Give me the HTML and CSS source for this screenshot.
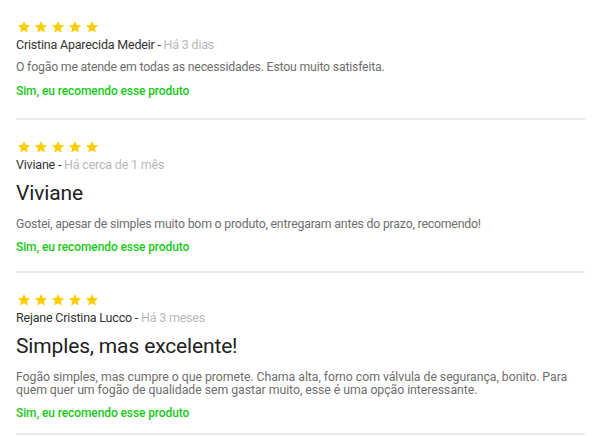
FILE: index.html
```html
<!DOCTYPE html>
<html lang="pt-BR">
<head>
<meta charset="utf-8">
<title>Avaliações</title>
<link rel="stylesheet" href="styles.css">
</head>
<body>
<svg width="0" height="0" class="defs" aria-hidden="true">
  <defs>
    <symbol id="star" viewBox="0 0 24 24">
      <path d="M12 1.5l3.1 6.9 7.4.7-5.6 5 1.7 7.4L12 17.6l-6.6 3.9 1.7-7.4-5.6-5 7.4-.7z"/>
    </symbol>
  </defs>
</svg>
<div class="reviews">
  <div class="review">
    <div class="stars">
      <svg class="star"><use href="#star"/></svg><svg class="star"><use href="#star"/></svg><svg class="star"><use href="#star"/></svg><svg class="star"><use href="#star"/></svg><svg class="star"><use href="#star"/></svg>
    </div>
    <div class="meta"><span class="author">Cristina Aparecida Medeir</span> - <span class="date">Há 3 dias</span></div>
    <p class="body">O fogão me atende em todas as necessidades. Estou muito satisfeita.</p>
    <p class="recommend">Sim, eu recomendo esse produto</p>
  </div>
  <div class="review">
    <div class="stars">
      <svg class="star"><use href="#star"/></svg><svg class="star"><use href="#star"/></svg><svg class="star"><use href="#star"/></svg><svg class="star"><use href="#star"/></svg><svg class="star"><use href="#star"/></svg>
    </div>
    <div class="meta"><span class="author">Viviane</span> - <span class="date">Há cerca de 1 mês</span></div>
    <h2 class="title">Viviane</h2>
    <p class="body">Gostei, apesar de simples muito bom o produto, entregaram antes do prazo, recomendo!</p>
    <p class="recommend">Sim, eu recomendo esse produto</p>
  </div>
  <div class="review">
    <div class="stars">
      <svg class="star"><use href="#star"/></svg><svg class="star"><use href="#star"/></svg><svg class="star"><use href="#star"/></svg><svg class="star"><use href="#star"/></svg><svg class="star"><use href="#star"/></svg>
    </div>
    <div class="meta"><span class="author">Rejane Cristina Lucco</span> - <span class="date">Há 3 meses</span></div>
    <h2 class="title">Simples, mas excelente!</h2>
    <p class="body body-wide">Fogão simples, mas cumpre o que promete. Chama alta, forno com válvula de segurança, bonito. Para quem quer um fogão de qualidade sem gastar muito, esse é uma opção interessante.</p>
    <p class="recommend">Sim, eu recomendo esse produto</p>
  </div>
</div>
</body>
</html>
```
FILE: styles.css
```css
html, body {
  margin: 0;
  padding: 0;
  background: #ffffff;
}
body {
  font-family: Roboto, "Liberation Sans", Arial, sans-serif;
  color: #333333;
}
.defs {
  position: absolute;
  width: 0;
  height: 0;
}
.reviews {
  padding: 0 15px 0 16px;
}
.review {
  padding: 19px 0 19px;
  border-bottom: 2px solid #ebebeb;
}
.review + .review {
  padding-top: 19px;
  padding-bottom: 16px;
}
.review:last-child {
  padding-bottom: 12px;
}
.stars {
  display: flex;
  align-items: flex-end;
  gap: 3px;
  height: 15px;
  padding-left: 1px;
}
.star {
  width: 14px;
  height: 14px;
  fill: #ffcc00;
}
.meta {
  margin-top: 3px;
  font-size: 12.5px;
  letter-spacing: -0.2px;
  line-height: 16px;
  color: #333333;
}
.date {
  color: #b8b8b8;
}
.title {
  margin: 6px 0 0;
  font-size: 21px;
  font-weight: 400;
  letter-spacing: -0.15px;
  line-height: 28px;
  color: #222222;
}
.body {
  margin: 8px 0 0;
  font-size: 12.3px;
  letter-spacing: -0.2px;
  line-height: 12.5px;
  color: #6e6e6e;
}
.title + .body {
  margin-top: 11px;
}
.body-wide {
  letter-spacing: -0.05px;
}
.recommend {
  margin: 9px 0 0;
  font-size: 12px;
  font-weight: 500;
  letter-spacing: -0.1px;
  line-height: 16px;
  color: #19c919;
}
```
